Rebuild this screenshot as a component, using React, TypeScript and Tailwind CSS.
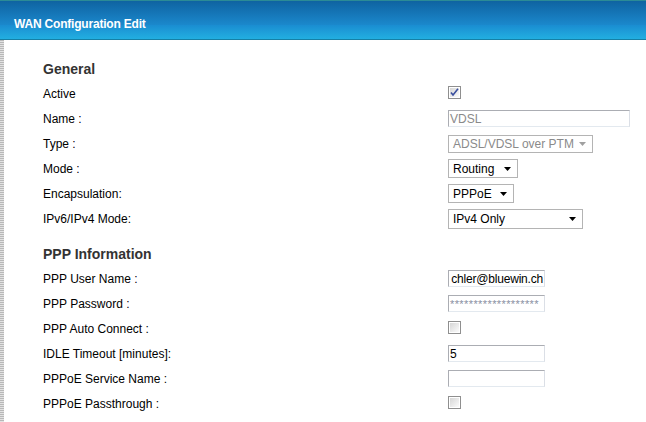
import React from "react";

const font = { fontFamily: '"Liberation Sans", Arial, sans-serif' };

const Caret: React.FC<{ disabled?: boolean }> = ({ disabled }) => (
  <svg width="7" height="4" viewBox="0 0 7 4" className="shrink-0">
    <path d="M0 0h7L3.5 4z" fill={disabled ? "#a0a0a0" : "#000"} />
  </svg>
);

const Select: React.FC<{ value: string; w: string; h: string; disabled?: boolean }> = ({
  value,
  w,
  h,
  disabled,
}) => (
  <div
    className={`${w} ${h} flex items-center justify-between border border-[#b4b4b4] bg-white pl-[4px] pr-[6px] text-[12px] ${
      disabled ? "text-[#8a8a8a]" : "text-black"
    }`}
  >
    <span className="whitespace-nowrap leading-none">{value}</span>
    <Caret disabled={disabled} />
  </div>
);

const TextBox: React.FC<{ w: string; children?: React.ReactNode; grey?: boolean; end?: boolean }> = ({
  w,
  children,
  grey,
  end,
}) => (
  <div
    className={`${w} h-[17px] flex items-center overflow-hidden border border-[#abadb3] border-b-[#e3e9ef] border-r-[#dbdfe6] bg-white px-[1px] text-[12px] ${
      grey ? "text-[#8a8a8a]" : "text-black"
    } ${end ? "justify-end" : ""}`}
  >
    <span className="whitespace-nowrap leading-none">{children}</span>
  </div>
);

const Check: React.FC<{ checked?: boolean }> = ({ checked }) => (
  <svg width="13" height="13" viewBox="0 0 13 13" className="mt-[-2px]">
    <defs>
      <linearGradient id="cb" x1="0" y1="0" x2="1" y2="1">
        <stop offset="0" stopColor="#d6d6d6" />
        <stop offset="1" stopColor="#fbfbfb" />
      </linearGradient>
    </defs>
    <rect x="0.5" y="0.5" width="12" height="12" fill="#fff" stroke="#8f8f8f" />
    <rect x="2" y="2" width="9" height="9" fill="url(#cb)" />
    {checked && <path d="M3 6.5l2 2.5L10 2.8" fill="none" stroke="#3a4f9e" strokeWidth="1.6" />}
  </svg>
);

const Row: React.FC<{ label: string; children?: React.ReactNode }> = ({ label, children }) => (
  <div className="flex h-[25px] items-center">
    <div className="w-[405px] text-[12px] text-black">{label}</div>
    <div className="flex items-center">{children}</div>
  </div>
);

const Heading: React.FC<{ children: React.ReactNode }> = ({ children }) => (
  <div className="flex h-[24px] items-center text-[14px] font-bold text-[#333]">{children}</div>
);

export default function App() {
  return (
    <div className="flex h-[422px] w-[646px] flex-col overflow-hidden bg-white" style={font}>
      <div className="h-[40px] shrink-0 bg-[linear-gradient(to_bottom,#2b8b96_0px,#2b8b96_1px,#0f63a1_1px,#1b88cc_25px,#1a8dd1_25px,#22afe1_39px,#1580a6_39px)] pl-[14px] pt-[11px]">
        <span className="text-[12px] font-bold leading-[14px] tracking-[-0.2px] text-white">
          WAN Configuration Edit
        </span>
      </div>
      <div className="flex flex-1">
        <div className="w-[4px] shrink-0 bg-[repeating-linear-gradient(to_bottom,#b8b8b8_0px,#b8b8b8_1px,#e2e2e2_1px,#e2e2e2_2px)]" />
        <div className="flex-1 pl-[39px] pt-[17px]">
          <Heading>General</Heading>
          <Row label="Active">
            <Check checked />
          </Row>
          <Row label="Name :">
            <TextBox w="w-[182px]" grey>
              VDSL
            </TextBox>
          </Row>
          <Row label="Type :">
            <Select value="ADSL/VDSL over PTM" w="w-[145px]" h="h-[18px]" disabled />
          </Row>
          <Row label="Mode :">
            <Select value="Routing" w="w-[70px]" h="h-[19px]" />
          </Row>
          <Row label="Encapsulation:">
            <Select value="PPPoE" w="w-[66px]" h="h-[19px]" />
          </Row>
          <Row label="IPv6/IPv4 Mode:">
            <Select value="IPv4 Only" w="w-[135px]" h="h-[20px]" />
          </Row>

          <div className="mt-[11px]">
            <Heading>PPP Information</Heading>
          </div>
          <Row label="PPP User Name :">
            <TextBox w="w-[97px]" end>
              <span className="tracking-[-0.2px]">chler@bluewin.ch</span>
            </TextBox>
          </Row>
          <Row label="PPP Password :">
            <TextBox w="w-[97px]" grey>
              <span className="text-[11px] tracking-[0.4px] text-[#8a90a2]">*******************</span>
            </TextBox>
          </Row>
          <Row label="PPP Auto Connect :">
            <Check />
          </Row>
          <Row label="IDLE Timeout [minutes]:">
            <TextBox w="w-[97px]">5</TextBox>
          </Row>
          <Row label="PPPoE Service Name :">
            <TextBox w="w-[97px]" />
          </Row>
          <Row label="PPPoE Passthrough :">
            <Check />
          </Row>
        </div>
      </div>
    </div>
  );
}
